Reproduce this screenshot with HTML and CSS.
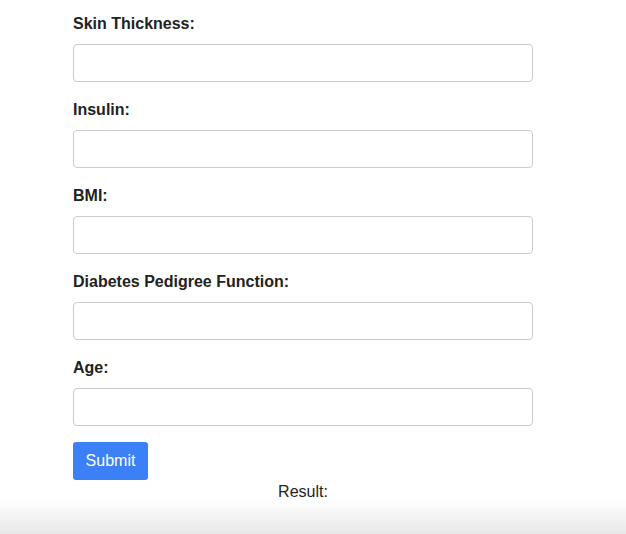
FILE: index.html
```html
<!DOCTYPE html>
<html>
<head>
<meta charset="utf-8">
<link rel="stylesheet" href="styles.css">
</head>
<body>
<div class="container">
  <form class="form">
    <div class="field">
      <label class="label">Skin Thickness:</label>
      <input class="input" type="text">
    </div>
    <div class="field">
      <label class="label">Insulin:</label>
      <input class="input" type="text">
    </div>
    <div class="field">
      <label class="label">BMI:</label>
      <input class="input" type="text">
    </div>
    <div class="field">
      <label class="label">Diabetes Pedigree Function:</label>
      <input class="input" type="text">
    </div>
    <div class="field">
      <label class="label">Age:</label>
      <input class="input" type="text">
    </div>
    <button class="btn" type="button">Submit</button>
  </form>
  <div class="result">Result:</div>
</div>
</body>
</html>
```
FILE: styles.css
```css
html {
  margin: 0;
  min-height: 100%;
  background: linear-gradient(to bottom, #ffffff 0, #ffffff 500px, #e8e8e8 534px);
}
body {
  margin: 0;
  font-family: "Liberation Sans", Arial, sans-serif;
  color: #222;
}
.container {
  width: 460px;
  margin: 0 0 0 73px;
  padding-top: 15px;
}
.form {
  display: flex;
  flex-direction: column;
  align-items: flex-start;
}
.field {
  width: 100%;
  margin-bottom: 19px;
}
.field:last-of-type {
  margin-bottom: 16px;
}
.label {
  display: block;
  font-size: 16px;
  font-weight: bold;
  line-height: 18px;
  margin-bottom: 11px;
  color: #222;
}
.input {
  display: block;
  box-sizing: border-box;
  width: 100%;
  height: 38px;
  border: 1px solid #cbcbcb;
  border-radius: 4px;
  background: #fff;
  margin: 0;
  padding: 0 10px;
  font-size: 15px;
}
.btn {
  height: 38px;
  width: 75px;
  background: #3b80f6;
  color: #fff;
  border: none;
  border-radius: 3px;
  font-family: "Liberation Sans", Arial, sans-serif;
  font-size: 16px;
  padding: 0;
}
.result {
  text-align: center;
  font-size: 16px;
  line-height: 18px;
  margin-top: 3px;
  color: #222;
}
```
